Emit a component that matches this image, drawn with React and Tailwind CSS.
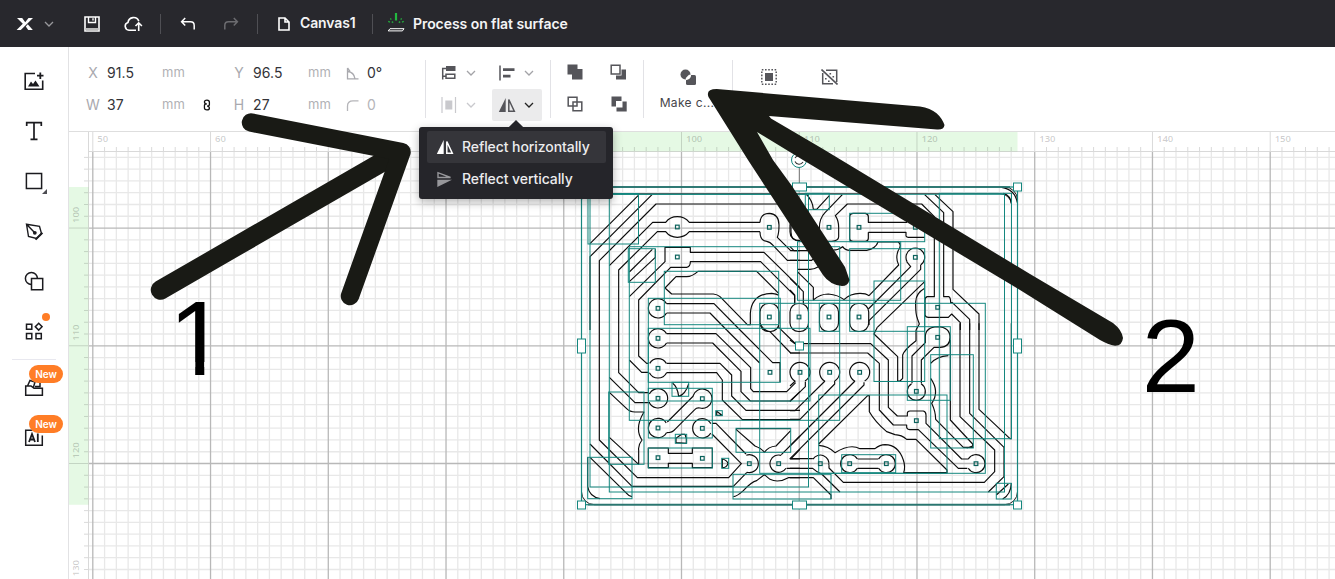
import React from "react";

const STEP = 11.774;
const range = (a, b) => Array.from({ length: b - a + 1 }, (_, i) => a + i);

/* ---------- small icons ---------- */
function Icon({ w = 18, h = w, vb, className = "", children }) {
  return (
    <svg width={w} height={h} viewBox={vb || `0 0 ${w} ${h}`} fill="none" stroke="currentColor" className={"block shrink-0 " + className}>
      {children}
    </svg>
  );
}
function Chevron({ className = "" }) {
  return (
    <Icon w={10} h={6} className={className}>
      <path d="M1 1l4 4 4-4" strokeWidth="1.3" />
    </Icon>
  );
}

/* ---------- header ---------- */
function Header() {
  return (
    <header className="flex h-[47px] shrink-0 items-center bg-[#28282d] text-white">
      <Icon w={18} h={14} className="ml-4">
        <path d="M1 1H6.2L9.200 5.200L12.500 1H17L4.800 13H.600L6.800 6.800Z" fill="currentColor" stroke="none" />
        <path d="M9.800 9.400L11.800 7.300L16.800 13H12.200Z" fill="currentColor" stroke="none" />
      </Icon>
      <Chevron className="ml-[10px] text-[#98989c]" />
      <Icon w={16} className="ml-[30px]">
        <path d="M1 1H15V15H1Z" strokeWidth="1.6" />
        <path d="M4.500 1V6.500H11.500V1M9 2.200V4.600" strokeWidth="1.400" />
        <path d="M1.600 12H14.400V14.400H1.600Z" fill="#bbb" stroke="none" />
      </Icon>
      <Icon w={19} h={16} className="ml-[24px]">
        <path d="M12 14.200H5A4 4 0 0 1 4 6.400A5.600 5.600 0 0 1 14.800 5.200" strokeWidth="1.600" />
        <path d="M14.700 15V7M11.500 10L14.700 6.800L17.900 10" strokeWidth="1.600" />
      </Icon>
      <div className="ml-[17px] h-5 w-px bg-[#4f4f54]" />
      <Icon w={16} h={14} className="ml-[19px]">
        <path d="M5.200 1L1.600 4.700L5.200 8.400M1.600 4.700H10.500Q14.200 4.700 14.200 8.400V12.500" strokeWidth="1.500" />
      </Icon>
      <Icon w={16} h={14} className="ml-[27px] text-[#6c6c70]">
        <path d="M10.800 1L14.400 4.700L10.800 8.400M14.400 4.700H5.500Q1.800 4.700 1.800 8.400V12.500" strokeWidth="1.500" />
      </Icon>
      <div className="ml-[18px] h-5 w-px bg-[#4f4f54]" />
      <Icon w={12} h={14} className="ml-[20px]">
        <path d="M1 1H7L11 5V13H1Z M7 1V5H11" strokeWidth="1.600" />
      </Icon>
      <span className="-mt-px ml-[10px] w-[57px] whitespace-nowrap text-[14px] font-semibold leading-5 tracking-[-0.12px] text-[#f4f4f5]">Canvas1</span>
      <div className="ml-[15px] h-5 w-px bg-[#4f4f54]" />
      <Icon w={18} h={20} className="ml-[14px] -mt-1">
        <path d="M9 1V8.500" stroke="#22b940" strokeWidth="2.200" />
        <path d="M1.200 9.300l1.800.8M16.800 9.300l-1.800.8M3.200 6.500l1.200 1M14.800 6.500l-1.200 1M4.800 9.600l1.400 1M13.200 9.600l-1.400 1" stroke="#22a83b" strokeWidth="1.300" />
        <path d="M3 16.700H17L15.400 18.900H1.200Z" stroke="#fff" strokeWidth="1" />
      </Icon>
      <span className="ml-[8px] mt-px whitespace-nowrap text-[14px] font-semibold leading-5 tracking-[-0.06px] text-[#f4f4f5]">Process on flat surface</span>
    </header>
  );
}

/* ---------- left tool rail ---------- */
function Tool({ children, badge, dot }) {
  return (
    <div className="relative flex h-[50px] w-[68px] items-center justify-center text-[#1b1b1f]">
      {children}
      {badge && <span className="absolute left-[29px] top-[2px] flex h-[18px] w-[34px] items-center justify-center rounded-full bg-[#ff7d26] text-[10px] font-semibold text-white">New</span>}
      {dot && <span className="absolute left-[42px] top-[7px] h-2 w-2 rounded-full bg-[#ff7d26]" />}
    </div>
  );
}
function Rail() {
  return (
    <nav className="flex w-[69px] shrink-0 flex-col border-r border-[#e2e2e4] bg-white pt-[9px]">
      <Tool>
        <Icon w={20}>
          <path d="M11 2.500H1.200V18.200H18.700V9.500" strokeWidth="1.600" />
          <path d="M4 15.500L7 10.500L9 13L11.500 9.500L15.500 15.500Z" fill="currentColor" stroke="none" />
          <path d="M16.300 1.500V8M13 4.700H19.500" strokeWidth="1.800" />
        </Icon>
      </Tool>
      <Tool>
        <Icon w={18} h={20}>
          <path d="M1.700 5V1.700H16.300V5M9 1.700V18.400M5.500 18.400H12.500" strokeWidth="1.700" />
        </Icon>
      </Tool>
      <Tool>
        <Icon w={26} h={26}>
          <path d="M5.400 5.400H20.600V20.600H5.400Z" strokeWidth="1.500" />
          <path d="M26 21V26H21Z" fill="#4d4d52" stroke="none" />
        </Icon>
      </Tool>
      <Tool>
        <Icon w={20}>
          <path d="M2.500 3.200L15.500 5.400L17.500 12.500L12.500 17.500L4.500 15.500Z M3 3.700L10.500 11.500" strokeWidth="1.400" />
          <path d="M11.500 18.600L18.400 11.800" strokeWidth="2" />
          <circle cx="10.800" cy="11.800" r="1.900" fill="currentColor" stroke="none" />
        </Icon>
      </Tool>
      <Tool>
        <Icon w={20}>
          <path d="M7.500 13.400A6 6 0 1 1 13.400 7.500" strokeWidth="1.500" />
          <path d="M7.500 7.500H18.700V18.700H7.500Z" strokeWidth="1.500" />
        </Icon>
      </Tool>
      <Tool dot>
        <Icon w={18}>
          <path d="M1.500 2.200H6.800V7.300H1.500ZM1.500 11.600H6.800V16.700H1.500ZM11 11.600H16.300V16.700H11ZM13.700 1.300L17.100 4.700L13.700 8.100L10.300 4.700Z" strokeWidth="1.500" />
        </Icon>
      </Tool>
      <div className="mx-3 mb-[3px] mt-[3px] h-px bg-[#e8e8ef]" />
      <Tool badge>
        <Icon w={20} h={18}>
          <path d="M1.700 7H7L10 9.200H18.400V16.200H1.700Z M3.500 7L6 1.500L11 3L9.500 8M11 7.500H16V3" strokeWidth="1.500" />
        </Icon>
      </Tool>
      <Tool badge>
        <Icon w={20} h={18}>
          <path d="M12 1.200H1.700V16.200H18.300V6.500" strokeWidth="1.500" />
          <path d="M5 13L8 5L11 13M6 10.500H10M13.800 4.500V13" strokeWidth="1.800" />
        </Icon>
      </Tool>
    </nav>
  );
}

/* ---------- property bar ---------- */
function Field({ label, value }) {
  return (
    <div className="flex h-8 items-center pb-[2px] text-[14px]">
      <span className="w-[14px] text-center text-[#a9a9ae]">{label}</span>
      <span className="ml-[7px] w-[55px] tracking-[.1px] text-[#333338]">{value}</span>
      <span className="mt-px w-[24px] text-[13px] text-[#b1b1b5]">mm</span>
    </div>
  );
}
function MirrorH({ className = "" }) {
  return (
    <Icon w={18} h={16} className={className}>
      <path d="M7.700 1V15H.800Z" fill="currentColor" stroke="none" />
      <path d="M10.800 2.500V14.300H16.300Z" strokeWidth="1.500" />
    </Icon>
  );
}
function Divider() {
  return <div className="h-[58px] w-px shrink-0 bg-[#e2e2e6]" />;
}
function PropertyBar() {
  return (
    <div className="flex h-[85px] shrink-0 border-b border-[#dedede] bg-white pb-[10px] pt-[10px] text-[#55555a]">
      <div className="flex w-[356px] shrink-0 pl-[17px]">
        <div className="w-[104px]">
          <Field label="X" value="91.5" />
          <Field label="W" value="37" />
        </div>
        <div className="flex w-[36px] flex-col justify-end pb-[10px] pl-[13px]">
          <Icon w={8} h={12} vb="0 0 9 14" className="text-[#111]">
            <path d="M3.200 5.200H2.600Q1.500 5 1.500 3.500Q1.500 1.200 4.500 1.200Q7.300 1.200 7.300 3.700V6.300Q7.300 8.300 4.500 8.300M5.500 8.800H6.200Q7.300 9 7.300 10.500Q7.300 12.800 4.500 12.800Q1.500 12.800 1.500 10.300V7.700Q1.500 5.700 4.500 5.700" strokeWidth="1.500" />
          </Icon>
        </div>
        <div className="ml-[6px] w-[104px]">
          <Field label="Y" value="96.5" />
          <Field label="H" value="27" />
        </div>
        <div className="ml-[10px]">
          <div className="flex h-8 items-center gap-[8px] pb-[2px] text-[14px] text-[#333338]">
            <Icon w={13} h={13} className="mt-[2px] text-[#a9a9ae]">
              <path d="M1.500 1V11.800H12.500M1.500 4.500Q8 5 9 11.800M1.500 1L4 4.500" strokeWidth="1.300" />
            </Icon>
            0°
          </div>
          <div className="flex h-8 items-center gap-[8px] pb-[2px] text-[14px] text-[#b5b5b9]">
            <Icon w={13} h={13} className="mt-[2px]">
              <path d="M1.500 12V7Q1.500 1.800 7 1.800H12.500" strokeWidth="1.300" />
            </Icon>
            0
          </div>
        </div>
      </div>

      <div className="mt-[3px] flex">
        <Divider />
      </div>
      <div className="grid w-[124px] shrink-0 grid-cols-[66px_50px] grid-rows-[32px_32px]">
        <div className="flex items-center pl-[14px]">
          <Icon w={18} h={16}>
            <path d="M6 1H15.500V6H6Z" fill="currentColor" stroke="none" />
            <path d="M6 9.300H14.800V13.300H6ZM6 3.500H2.700V14.500M2.700 11.300H6" strokeWidth="1.500" />
          </Icon>
          <Chevron className="ml-[8px] text-[#a3a3a7]" />
        </div>
        <div className="flex items-center pl-[7px]">
          <Icon w={16}>
            <path d="M1 .500V15.500" strokeWidth="1.500" />
            <path d="M4 3.200H15.500V6H4ZM4 9.800H11.500V12.600H4Z" fill="currentColor" stroke="none" />
          </Icon>
          <Chevron className="ml-[9px] text-[#a3a3a7]" />
        </div>
        <div className="flex items-center pl-[14px] text-[#c9c9cd]">
          <Icon w={18} h={16}>
            <path d="M2 0V16M15.500 0V16" strokeWidth="1.200" />
            <path d="M5.300 3.500H12.300V12.500H5.300Z" fill="currentColor" stroke="none" />
          </Icon>
          <Chevron className="ml-[8px]" />
        </div>
        <div className="flex items-center rounded-[2px] bg-[#ebebec] pl-[6px]">
          <MirrorH className="text-[#55555a]" />
          <Chevron className="ml-[8px] text-[#222]" />
        </div>
      </div>
      <div className="mt-[3px] flex">
        <Divider />
      </div>
      <div className="-mt-px grid w-[92px] shrink-0 grid-cols-2 grid-rows-[32px_32px] pl-[16px]">
        <div className="flex items-center">
          <Icon w={16}>
            <path d="M.500.500H10.500V5H15.500V15.500H5V10.500H.500Z" fill="currentColor" stroke="none" />
          </Icon>
        </div>
        <div className="flex items-center pl-[5px]">
          <Icon w={17} h={16}>
            <path d="M1.200 1.200H10V10H1.200Z" strokeWidth="1.500" />
            <path d="M11.500 5.500H16V15.500H6V11.500H11.500Z" fill="currentColor" stroke="none" />
          </Icon>
        </div>
        <div className="flex items-center">
          <Icon w={16}>
            <path d="M1.200 1.200H10V10H1.200ZM6 6H14.800V14.800H6Z" strokeWidth="1.500" />
          </Icon>
        </div>
        <div className="flex items-center pl-[6px]">
          <Icon w={16}>
            <path d="M.500.500H10.500V5H5V10.500H.500ZM11.500 5.500H15.700V15.500H5.500V11.500H11.500Z" fill="currentColor" stroke="none" />
          </Icon>
        </div>
      </div>
      <div className="mt-[3px] flex">
        <Divider />
      </div>
      <div className="flex w-[86px] shrink-0 flex-col items-center pt-[12px]">
        <Icon w={16} className="ml-[2px]">
          <circle cx="5.500" cy="5.500" r="5" fill="currentColor" stroke="none" />
          <path d="M6 6h8.500q1.500 0 1.500 1.500V14.500q0 1.500-1.500 1.500H7.500Q6 16 6 14.500Z" fill="currentColor" stroke="none" />
          <path d="M5.800 11.200V9L9 5.800H11.200Q11 10.500 5.800 11.200Z" fill="#fff" stroke="none" />
        </Icon>
        <span className="mt-[8px] whitespace-nowrap text-[12px] leading-5 tracking-[.35px] text-[#444449]">Make c...</span>
      </div>
      <div className="ml-[2px] mt-[3px] flex">
        <Divider />
      </div>
      <div className="flex gap-[45px] pl-[28px] pt-[12px]">
        <Icon w={16}>
          <path d="M4 4H12V12H4Z" fill="currentColor" stroke="none" />
          <path d="M.800.800H15.200V15.200H.800Z" strokeWidth="1.500" strokeDasharray="1.600 1.600" />
        </Icon>
        <Icon w={17} h={16} className="-ml-px">
          <path d="M5 1.200H15.700V13M12 14.800H1.700V4" strokeWidth="1.500" />
          <path d="M.500.500L16.500 15.500" strokeWidth="1.600" />
          <path d="M4 9h1.600v1.600H4zM7 11.500h1.600v1.600H7zM11.500 7h1.600v1.600h-1.600zM8.500 4h1.600v1.600H8.500z" fill="currentColor" stroke="none" />
        </Icon>
      </div>
    </div>
  );
}

function ReflectMenu() {
  return (
    <div className="absolute left-[419px] top-[127px] h-[72px] w-[194px] rounded-[3px] bg-[#25252a] px-2 pt-1 text-[14px] font-medium tracking-[-0.08px] text-[#ececee] shadow-[0_3px_10px_rgba(0,0,0,0.3)]">
      <div className="absolute -top-[5px] left-[92px] h-[10px] w-[10px] rotate-45 bg-[#25252a]" />
      <div className="relative flex h-8 w-[179px] items-center rounded-[2px] bg-[#35353a] pl-[9px]">
        <MirrorH className="text-white" />
        <span className="-mt-[2px] ml-[8px] whitespace-nowrap">Reflect horizontally</span>
      </div>
      <div className="relative flex h-8 items-center pl-[9px]">
        <Icon w={18} h={16} className="text-[#97979b]">
          <path d="M2 1.700V6.500H14.500Z" strokeWidth="1.400" />
          <path d="M1.300 8.800H16L1.300 16Z" fill="currentColor" stroke="none" />
        </Icon>
        <span className="-mt-[2px] ml-[8px] whitespace-nowrap">Reflect vertically</span>
      </div>
    </div>
  );
}

/* ---------- board artwork, each tile stored at three units per pixel ---------- */
/* arcs: centre x, centre y, radius, start angle, end angle (degrees, clockwise) */
const TILES = [
  {
    x: 570, y: 150,
    d: [
      "M60 281L205 136", "M60 540V320L246 134", "M88 540V332L258 162H640",
      "M118 347L248 217H287Q300 200 322 200T358 217H570",
      "M146 540V360L262 245H287Q300 262 322 262T358 245H570",
      "M570 217Q572 190 598 190Q627 192 627 225Q627 250 622 262L662 302H690",
      "M570 245Q570 272 590 274Q600 275 610 287L652 331H690",
      "M690 272Q660 270 660 245V225L670 195",
      "M178 366L247 298", "M178 395L256 322V298",
      "M178 440L285 335V292H361V307H582L690 413",
      "M206 540V450L302 352H350Q361 350 361 335H572L674 437V462",
      "M285 414L318 380H350Q366 380 384 364H560L626 430",
      "M285 414L305 432H430Q442 433 450 440L532 524H541V490Q545 432 605 430Q620 432 626 436",
      "M290 461H432L510 540", "M290 489H420L470 540",
    ],
    pads: [[322, 231], [598, 232], [322, 321], [264, 475], [598, 501]],
    arcs: [[264, 475, 29, 29, 331]],
  },
  {
    x: 790, y: 150,
    d: [
      "M46 130Q68 150 70 178H80L118 137",
      "M157 134L105 188Q88 205 88 235V255Q90 272 110 274H125Q146 272 146 260V232Q146 212 136 197L172 162H395L433 200V440H412Q405 442 405 450V495Q407 502 415 502H475L485 492L511 518V540",
      "M404 134L461 188V440H476Q482 442 482 458H487L539 508V540",
      "M435 134L489 185V418L567 492V540",
      "M179 200Q180 190 190 190H226Q235 192 235 200V217H350V205Q355 195 376 195",
      "M235 247V265Q235 274 226 274H190Q179 274 179 265V200",
      "M235 247H348V258Q350 262 355 262H404",
      "M0 290L12 302H50L100 295M130 300Q145 300 158 290Q165 301 180 301H230Q258 295 264 276H325Q337 285 324 303Q316 325 326 345L237 437",
      "M0 331H65L80 320", "M22 358H60Q72 358 85 350", "M22 365L70 412V450Q90 432 115 432Q145 435 162 449Q180 430 210 430Q228 430 237 437",
      "M350 335L362 350L235 477", "M392 345V358L237 512V525",
      "M404 395L262 532",
      "M404 415Q378 430 377 455Q376 490 382 505L388 522L378 540",
      "M0 385L40 425V462", "M0 420L14 435V460",
      "M635 112Q675 118 682 158", "M640 130Q662 137 664 160",
    ],
    pads: [[27, 501], [117, 232], [117, 501], [207, 232], [207, 501], [376, 232], [376, 322], [443, 472]],
    arcs: [[376, 322, 28, 153, 415]],
  },
  {
    x: 570, y: 320,
    d: [
      "M290 41H438L542 143V206L550 215H650L677 188",
      "M290 69H428L513 154V215L541 243H660L690 215",
      "M510 30L608 128H630V186", "M470 30L569 129", "M570 10Q580 32 600 35L662 99H690", "M626 15V22L674 69",
      "M290 130H450L485 165V228L528 271H690",
      "M290 158H440L457 180V240L517 299H690",
      "M206 30V108L230 130H237", "M178 120L215 157H237", "M88 30V360L202 473H476L514 431L426 342",
      "M146 30V158L206 218H237", "M118 172L195 248H240",
      "M118 217L170 266Q180 276 195 276H222Q192 325 216 360Q204 375 206 390V433L118 352",
      "M426 310H438L528 402",
      "M60 372L186 499H490L530 458", "M60 412L170 520Q178 530 186 530",
      "M53 412V500Q58 530 90 536",
      "M292 306L370 228", "M290 338Q308 338 315 328L375 268Q380 262 390 264",
      "M235 384H295V400H367V384H427V443H367V430H295V443H235Z",
      "M308 190Q322 200 326 229Q345 225 356 192", "M440 286V274L456 286Z",
      "M318 368V355L335 343H345L349 356V370Z", "M457 443V417Q470 420 474 430Q470 443 457 443",
      "M498 326H660M498 328L555 378Q575 385 583 397Q595 380 618 378L662 332",
      "M634 404L690 348", "M690 388L662 417H690", "M650 445H690",
      "M490 530Q500 530 520 512Q545 485 560 482L583 464L600 478Q625 490 655 473H690",
    ],
    pads: [[264, 55], [264, 145], [264, 235], [397, 236], [264, 324], [397, 325], [264, 413], [397, 415], [538, 431], [626, 431], [600, 157]],
    arcs: [
      [264, 55, 29, 29, 331], [264, 145, 29, 27, 153], [264, 145, 29, 211, 329], [264, 235, 29, 207, 513],
      [397, 236, 29, 196, 464], [264, 324, 29, 29, 328], [397, 325, 29, 30, 331],
      [538, 431, 27, 250, 467], [626, 431, 26, 32, 287],
    ],
  },
  {
    x: 790, y: 320,
    d: [
      "M0 99H233L268 130V270L310 315H350V322Q352 329 360 329H385L505 445H532",
      "M0 60L15 71H242L295 120V262L322 288H352V280Q352 273 360 273H400Q408 275 408 285V310L515 417H535",
      "M46 185V200L0 245", "M16 183L0 198", "M105 183L15 272H0", "M134 183V192L30 298H0",
      "M195 183L0 378", "M222 187V195L0 416H68", "M0 445H68Q80 456 95 462L150 516",
      "M117 436V444L160 487H583L614 455V390L510 290V10",
      "M567 10V268L660 356H664V10", "M539 10V280L642 382V470L595 516",
      "M86 372L233 227H238V275Q255 305 290 335L315 344Q335 345 350 358H378L471 450V458H341Q347 440 340 420Q325 375 285 374Q270 374 255 386H210Q180 370 135 398Q115 378 86 376",
      "M203 417H265M203 445H265",
      "M0 473H70L123 525V537",
      "M366 190V108L406 68V50Q406 22 443 20Q480 22 480 52Q480 82 450 82H432L394 120V190",
      "M262 22L252 42L323 110V183H330L338 175V105Q342 90 378 62V30",
      "M422 130Q440 110 475 107", "M422 175Q450 215 425 250Q437 275 437 298L520 382H550", "M481 60V300L548 372V378L530 384",
      "M664 490Q662 525 638 537", "M619 525L655 492",
    ],
    pads: [[30, 157], [119, 157], [209, 157], [443, 52], [379, 214], [379, 302], [91, 431], [179, 431], [289, 431], [558, 431]],
    arcs: [
      [30, 157, 30, 118, 420], [119, 157, 30, 118, 420], [209, 157, 30, 118, 420], [379, 214, 27, -58, 238],
      [91, 431, 26, -148, 12], [179, 431, 27, 31, 329], [289, 431, 27, 211, 509], [558, 431, 27, 211, 509],
    ],
  },
];

const RAD = Math.PI / 180;
function arcPath([x, y, r, a, b]) {
  const px = (t) => (x + r * Math.cos(t * RAD)).toFixed(1);
  const py = (t) => (y + r * Math.sin(t * RAD)).toFixed(1);
  return `M${px(a)} ${py(a)}A${r} ${r} 0 ${b - a > 180 ? 1 : 0} 1 ${px(b)} ${py(b)}`;
}

/* bounding boxes of the separate paths: x1, y1, x2, y2 */
const BOXES = [
  [588, 193.500, 638.500, 244], [590, 194.300, 808.500, 487], [609.300, 194.300, 1004.500, 492],
  [629.300, 246.700, 839.700, 420.300], [628.300, 248.700, 655.300, 282.300], [664.300, 271.300, 778.700, 324.700],
  [648.300, 298.300, 780.300, 382.300], [648.300, 328.300, 810, 401], [759.700, 303.300, 985.300, 473.300],
  [648.300, 388.300, 712.300, 438], [672, 382.300, 688.700, 396.300], [715.700, 410.700, 722.300, 415.700],
  [675.300, 434.300, 686.700, 443.300], [648.300, 448, 712.300, 468], [721.700, 458.300, 728.700, 468.300],
  [736, 428.300, 790.700, 452.300], [733, 474.300, 831, 499], [608.700, 392, 644, 464.300], [587.700, 457.300, 632, 498.700],
  [805.300, 193.300, 829.300, 209.700], [849.700, 213.300, 924.700, 241.700], [797.500, 241.700, 900.700, 300.300],
  [849.700, 248.700, 924.700, 331.300], [874, 281, 924.700, 381.500], [819.300, 303.300, 839.300, 331.300],
  [907.300, 326.700, 950.300, 400.300], [939.300, 193.300, 1011.500, 438.700], [930.700, 354.700, 973.300, 448],
  [818.700, 395, 947, 473.300], [841.700, 454.700, 895.700, 472.700], [996.300, 483.300, 1011.300, 499],
];
const CAPSULES = [[760, 303.500, 19, 28], [790, 303.500, 18.500, 28], [819.500, 303.500, 19, 28], [849.700, 303.500, 19, 28]];

function Board() {
  return (
    <g fill="none">
      <rect x="581.500" y="187" width="436" height="317.700" rx="13" stroke="#222" />
      <path d="M588 193.500H1000Q1010 195 1011.500 204" stroke="#333" strokeWidth=".8" />
      {TILES.map((t, i) => (
        <path
          key={i}
          transform={`translate(${t.x} ${t.y}) scale(.33333)`}
          stroke="#0c0c0c"
          strokeWidth="3.500"
          strokeLinejoin="round"
          d={t.d.join("") + t.arcs.map(arcPath).join("")}
        />
      ))}
      <g stroke="#0c0c0c" strokeWidth="1.150">
        {CAPSULES.map(([x, y, w, h]) => (
          <rect key={x} x={x} y={y} width={w} height={h} rx="8.500" />
        ))}
        <path d="M791 224V232Q791 241 800 241H808" />
      </g>
      <g stroke="#14877f" strokeWidth="1">
        {BOXES.map(([a, b, c, d], i) => (
          <rect key={i} x={a} y={b} width={c - a} height={d - b} />
        ))}
      </g>
      {TILES.map((t, i) => (
        <g key={i} transform={`translate(${t.x} ${t.y}) scale(.33333)`} stroke="#0b625c" strokeWidth="3.600">
          {t.pads.map(([x, y]) => (
            <rect key={`${x}-${y}`} x={x - 5.500} y={y - 5.500} width="11" height="11" />
          ))}
        </g>
      ))}
      <path d="M799.500 166V187" stroke="#888" strokeWidth="1" />
      <rect x="581.500" y="187" width="436" height="317.700" stroke="#17867e" strokeWidth="1.200" />
      <path d="M581.500 187H1010M588 504.700H1010" stroke="#2a7670" strokeWidth="1.700" />
      <g stroke="#14877f" strokeWidth="1" fill="#fff">
        <rect x="1013.500" y="183" width="8" height="8" />
        <rect x="577.500" y="501" width="8" height="8" />
        <rect x="1013.500" y="501" width="8" height="8" />
        <rect x="792.500" y="183" width="14" height="8" />
        <rect x="792.500" y="501" width="14" height="8" />
        <rect x="577.500" y="339" width="8" height="14" />
        <rect x="1013.500" y="339" width="8" height="14" />
        <rect x="795.500" y="342" width="8" height="8" />
        <circle cx="799" cy="160" r="7.500" />
      </g>
      <path d="M795 158A4.500 4.500 0 0 1 803 158.500M803 162A4.500 4.500 0 0 1 795 161.500" stroke="#333" strokeWidth="1.100" />
    </g>
  );
}

function Canvas() {
  const x0 = 92.800;
  const y0 = 110.300;
  const xs = range(0, 105).map((i) => x0 + i * STEP);
  const ys = range(4, 39).map((i) => y0 + i * STEP);
  return (
    <svg className="block h-[447px] w-[1266px]" viewBox="69 132 1266 447">
      <rect x="69" y="132" width="1266" height="447" fill="#fff" />
      <g strokeWidth="1.300">
        {xs.map((x, i) => (i % 10 ? <path key={i} d={`M${x} 152V579`} stroke="#e8e8e8" /> : null))}
        {ys.map((y, i) => ((i + 4) % 10 ? <path key={i} d={`M89 ${y}H1335`} stroke="#e8e8e8" /> : null))}
        {xs.map((x, i) => (i % 10 ? null : <path key={i} d={`M${x} 152V579`} stroke="#b8b8b8" />))}
        {ys.map((y, i) => ((i + 4) % 10 ? null : <path key={i} d={`M89 ${y}H1335`} stroke="#b8b8b8" />))}
      </g>
      <Board />
      <path d="M69 132H1335V151.500H88.500V579H69Z" fill="#fff" />
      <path d="M581.500 132H1017.500V151.500H581.500ZM69 187H88.500V504.700H69Z" fill="#e5f9e4" />
      <g stroke="#000" strokeOpacity=".15" strokeWidth="1">
        <path d="M89 151.500H1335M88.500 132V579" />
        {xs.map((x, i) => (
          <path key={i} d={i % 10 ? `M${x} 147V151` : `M${x} 132V151`} />
        ))}
        {ys.map((y, i) => (
          <path key={i} d={(i + 4) % 10 ? `M84 ${y}H88` : `M69 ${y}H88`} />
        ))}
      </g>
      <g fill="#000" fillOpacity=".2" className="font-['Open_Sans',sans-serif] text-[9.500px] font-semibold">
        {[0, 1, 5, 6, 7, 8, 9, 10].map((i) => (
          <text key={i} x={x0 + i * 10 * STEP + 4.500} y="142">{50 + i * 10}</text>
        ))}
        {range(1, 4).map((i) => {
          const y = y0 + i * 10 * STEP - 5;
          return <text key={i} x="79" y={y} transform={`rotate(-90 79 ${y})`}>{90 + i * 10}</text>;
        })}
      </g>
    </svg>
  );
}

/* ---------- hand-drawn guide arrows and step numbers ---------- */
function Annotations() {
  return (
    <svg className="pointer-events-none absolute left-0 top-0 h-[579px] w-[1335px]" viewBox="0 0 1335 579">
      <clipPath id="one">
        <path d="M160 290H230V362H204.300V376H195.200V362H160Z" />
      </clipPath>
      <g stroke="#191a15" strokeLinecap="round" strokeLinejoin="round" fill="none">
        <path d="M160.500 290L397 153.500" strokeWidth="19.500" />
        <path d="M251 122.500L401.500 152L350 296" strokeWidth="18.500" />
      </g>
      <path fill="#191a15" d="M716.700 89L920 106.500C934 108 942 117 944.500 125Q944 130 937 129.500L769 116L771 118.500L823 149L1030 274L1113 323Q1122 330 1123 338Q1122 346 1115 345.700Q1108 344.500 1100 340L1020 290L803 160L757 132L773 160L792 186L845 267L849.500 280Q848 286 842 286Q830 285 823 275L748 160L708.500 97Q705.500 89 716.700 89Z" />
      <g fill="#000" className="font-['Liberation_Sans',Arial,sans-serif]">
        <g clipPath="url(#one)">
          <text x="168.700" y="375" className="text-[105px]">1</text>
        </g>
        <text x="1141.800" y="391.700" className="text-[104.500px]">2</text>
      </g>
    </svg>
  );
}

export default function App() {
  return (
    <div className="relative flex h-[579px] w-[1335px] flex-col overflow-hidden bg-white font-['Inter',sans-serif]">
      <Header />
      <div className="flex min-h-0 flex-1">
        <Rail />
        <main className="flex min-w-0 flex-1 flex-col">
          <PropertyBar />
          <Canvas />
        </main>
      </div>
      <ReflectMenu />
      <Annotations />
    </div>
  );
}
